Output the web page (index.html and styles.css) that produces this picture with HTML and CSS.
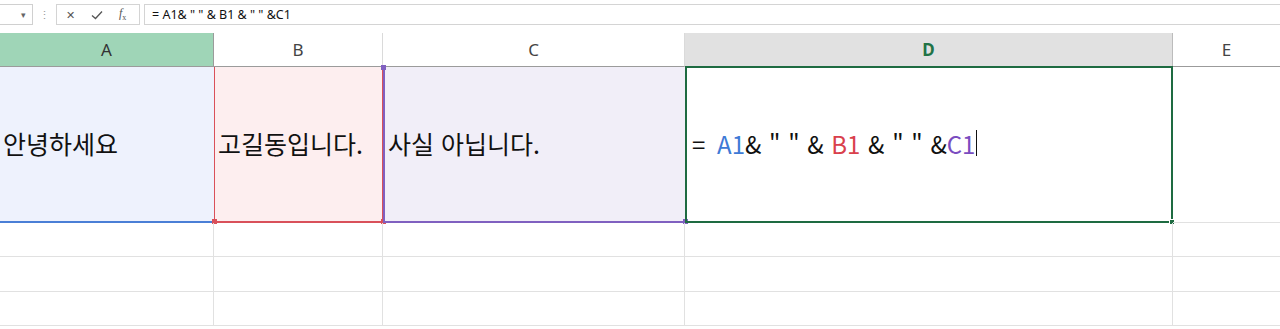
FILE: index.html
```
<!DOCTYPE html>
<html lang="ko">

<head>
     <meta charset="UTF-8">
     <meta name="viewport" content="width=device-width, initial-scale=1.0">
     <title>Sheet</title>
     <link rel="stylesheet" href="styles.css">
</head>

<body>
     <div class="toolbar">
          <div class="namebox"><span class="arrow">&#9662;</span></div>
          <div class="dots">&#8942;</div>
          <div class="fnbox">
               <span class="fn-x">&#x2715;</span>
               <span class="fn-ok">
                    <svg width="12" height="10" viewBox="0 0 12 10"><path d="M1 5.5 L4.5 8.5 L11 1.5" fill="none" stroke="#555" stroke-width="1.3"/></svg>
               </span>
               <span class="fn-fx"><i>f</i><sub>x</sub></span>
          </div>
          <div class="formula">= A1&amp; " " &amp; B1 &amp; " " &amp;C1</div>
     </div>

     <div class="sheet">
          <div class="head sel-a">A</div>
          <div class="head">B</div>
          <div class="head">C</div>
          <div class="head sel-d">D</div>
          <div class="head last">E</div>

          <div class="cell big ref-a">안녕하세요</div>
          <div class="cell big ref-b">고길동입니다.<span class="h h-bl red"></span><span class="h h-br red"></span></div>
          <div class="cell big ref-c">사실 아닙니다.<span class="h h-br purple"></span><span class="h h-tl purple"></span></div>
          <div class="cell big active"><span class="expr">= <span class="c-a">A1</span>&amp; " " &amp; <span class="c-b">B1</span> &amp; " " &amp;<span class="c-c">C1</span></span><span class="caret"></span><span class="h h-br green"></span></div>
          <div class="cell big"></div>

          <div class="cell"></div><div class="cell"></div><div class="cell"></div><div class="cell"></div><div class="cell"></div>
          <div class="cell"></div><div class="cell"></div><div class="cell"></div><div class="cell"></div><div class="cell"></div>
          <div class="cell"></div><div class="cell"></div><div class="cell"></div><div class="cell"></div><div class="cell"></div>
     </div>
</body>

</html>
```

FILE: styles.css
```
body {
     margin: 0;
     background: #fff;
     font-family: "Noto Sans", "Noto Sans CJK KR", sans-serif;
     overflow: hidden;
}

/* formula bar */
.toolbar {
     height: 33px;
     display: flex;
     align-items: flex-start;
     padding-top: 4px;
     box-sizing: border-box;
     font-size: 12px;
     color: #222;
}

.namebox {
     width: 33px;
     height: 21px;
     box-sizing: border-box;
     border: 1px solid #d0d0d0;
     border-left: none;
     position: relative;
}

.namebox .arrow {
     position: absolute;
     left: 21px;
     top: 3px;
     font-size: 9px;
     color: #666;
}

.dots {
     width: 23px;
     text-align: center;
     color: #999;
     font-size: 11px;
     line-height: 21px;
}

.fnbox {
     width: 84px;
     height: 21px;
     box-sizing: border-box;
     border: 1px solid #d4d4d4;
     display: flex;
     align-items: center;
     color: #555;
}

.fn-x {
     margin-left: 9px;
     font-size: 11px;
}

.fn-ok {
     margin-left: 16px;
     display: flex;
}

.fn-fx {
     margin-left: 16px;
     font-family: "Liberation Serif", serif;
     font-size: 12px;
}

.fn-fx sub {
     font-size: 8px;
}

.formula {
     flex: 1;
     margin-left: 4px;
     height: 21px;
     box-sizing: border-box;
     border: 1px solid #d4d4d4;
     border-right: none;
     padding-left: 7px;
     line-height: 19px;
     font-size: 12.5px;
     color: #111;
}

/* grid */
.sheet {
     display: grid;
     grid-template-columns: 214px 169px 302px 488px 1fr;
     grid-template-rows: 34px 156px 34px 35px 34px;
}

.head {
     display: flex;
     align-items: center;
     justify-content: center;
     font-size: 17px;
     color: #444;
     border-right: 1px solid #dadada;
     border-bottom: 1px solid #9b9b9b;
}

.head.sel-a {
     background: #9fd5b7;
     border-right-color: #9b9b9b;
     color: #333;
}

.head.sel-d {
     background: #e1e1e1;
     color: #217346;
     font-weight: bold;
     border-right-color: #bcbcbc;
}

.head.last {
     border-right: none;
}

.cell {
     border-right: 1px solid #e1e1e1;
     border-bottom: 1px solid #e1e1e1;
     position: relative;
}

.cell:nth-child(5n) {
     border-right: none;
}

.big {
     display: flex;
     align-items: center;
     font-family: "Noto Sans CJK KR", sans-serif;
     font-size: 25px;
     color: #111;
     white-space: pre;
     padding-bottom: 3px;
}

.ref-a {
     background: #eef2fd;
     padding-left: 3px;
     border-right: none;
     border-bottom: 2px solid #4a7fd6;
}

.ref-b {
     background: #fdeeef;
     padding-left: 4px;
     box-shadow: inset 1px 0 #d9505a, inset -1px 0 #d9505a;
     border-right: none;
     border-bottom: 2px solid #d9505a;
}

.ref-c {
     background: #f1eef8;
     padding-left: 5px;
     box-shadow: inset 2px 0 #8060c0;
     border-right: none;
     border-bottom: 2px solid #8060c0;
}

.active {
     padding-left: 5px;
     border: 2px solid #1e6b41;
     border-top: none;
     margin-top: -1px;
     box-shadow: inset 0 2px #1e6b41;
     padding-top: 2px;
     font-size: 24px;
     word-spacing: 1px;
}

.c-a {
     color: #3e7ad6;
     margin-left: 4px;
}

.c-b {
     color: #d9404c;
}

.c-c {
     color: #7a4cc0;
}

.caret {
     display: inline-block;
     width: 1px;
     height: 26px;
     background: #111;
     margin-left: 1px;
}

/* range handles */
.h {
     position: absolute;
     width: 5px;
     height: 5px;
}

.h-bl {
     left: -2px;
     bottom: -3px;
}

.h-br {
     right: -3px;
     bottom: -3px;
}

.h-tl {
     left: -2px;
     top: -2px;
}

.red {
     background: #d9505a;
}

.purple {
     background: #8060c0;
}

.green {
     background: #1e6b41;
     border: 1px solid #fff;
     width: 4px;
     height: 4px;
     right: -4px;
     bottom: -4px;
}
```
